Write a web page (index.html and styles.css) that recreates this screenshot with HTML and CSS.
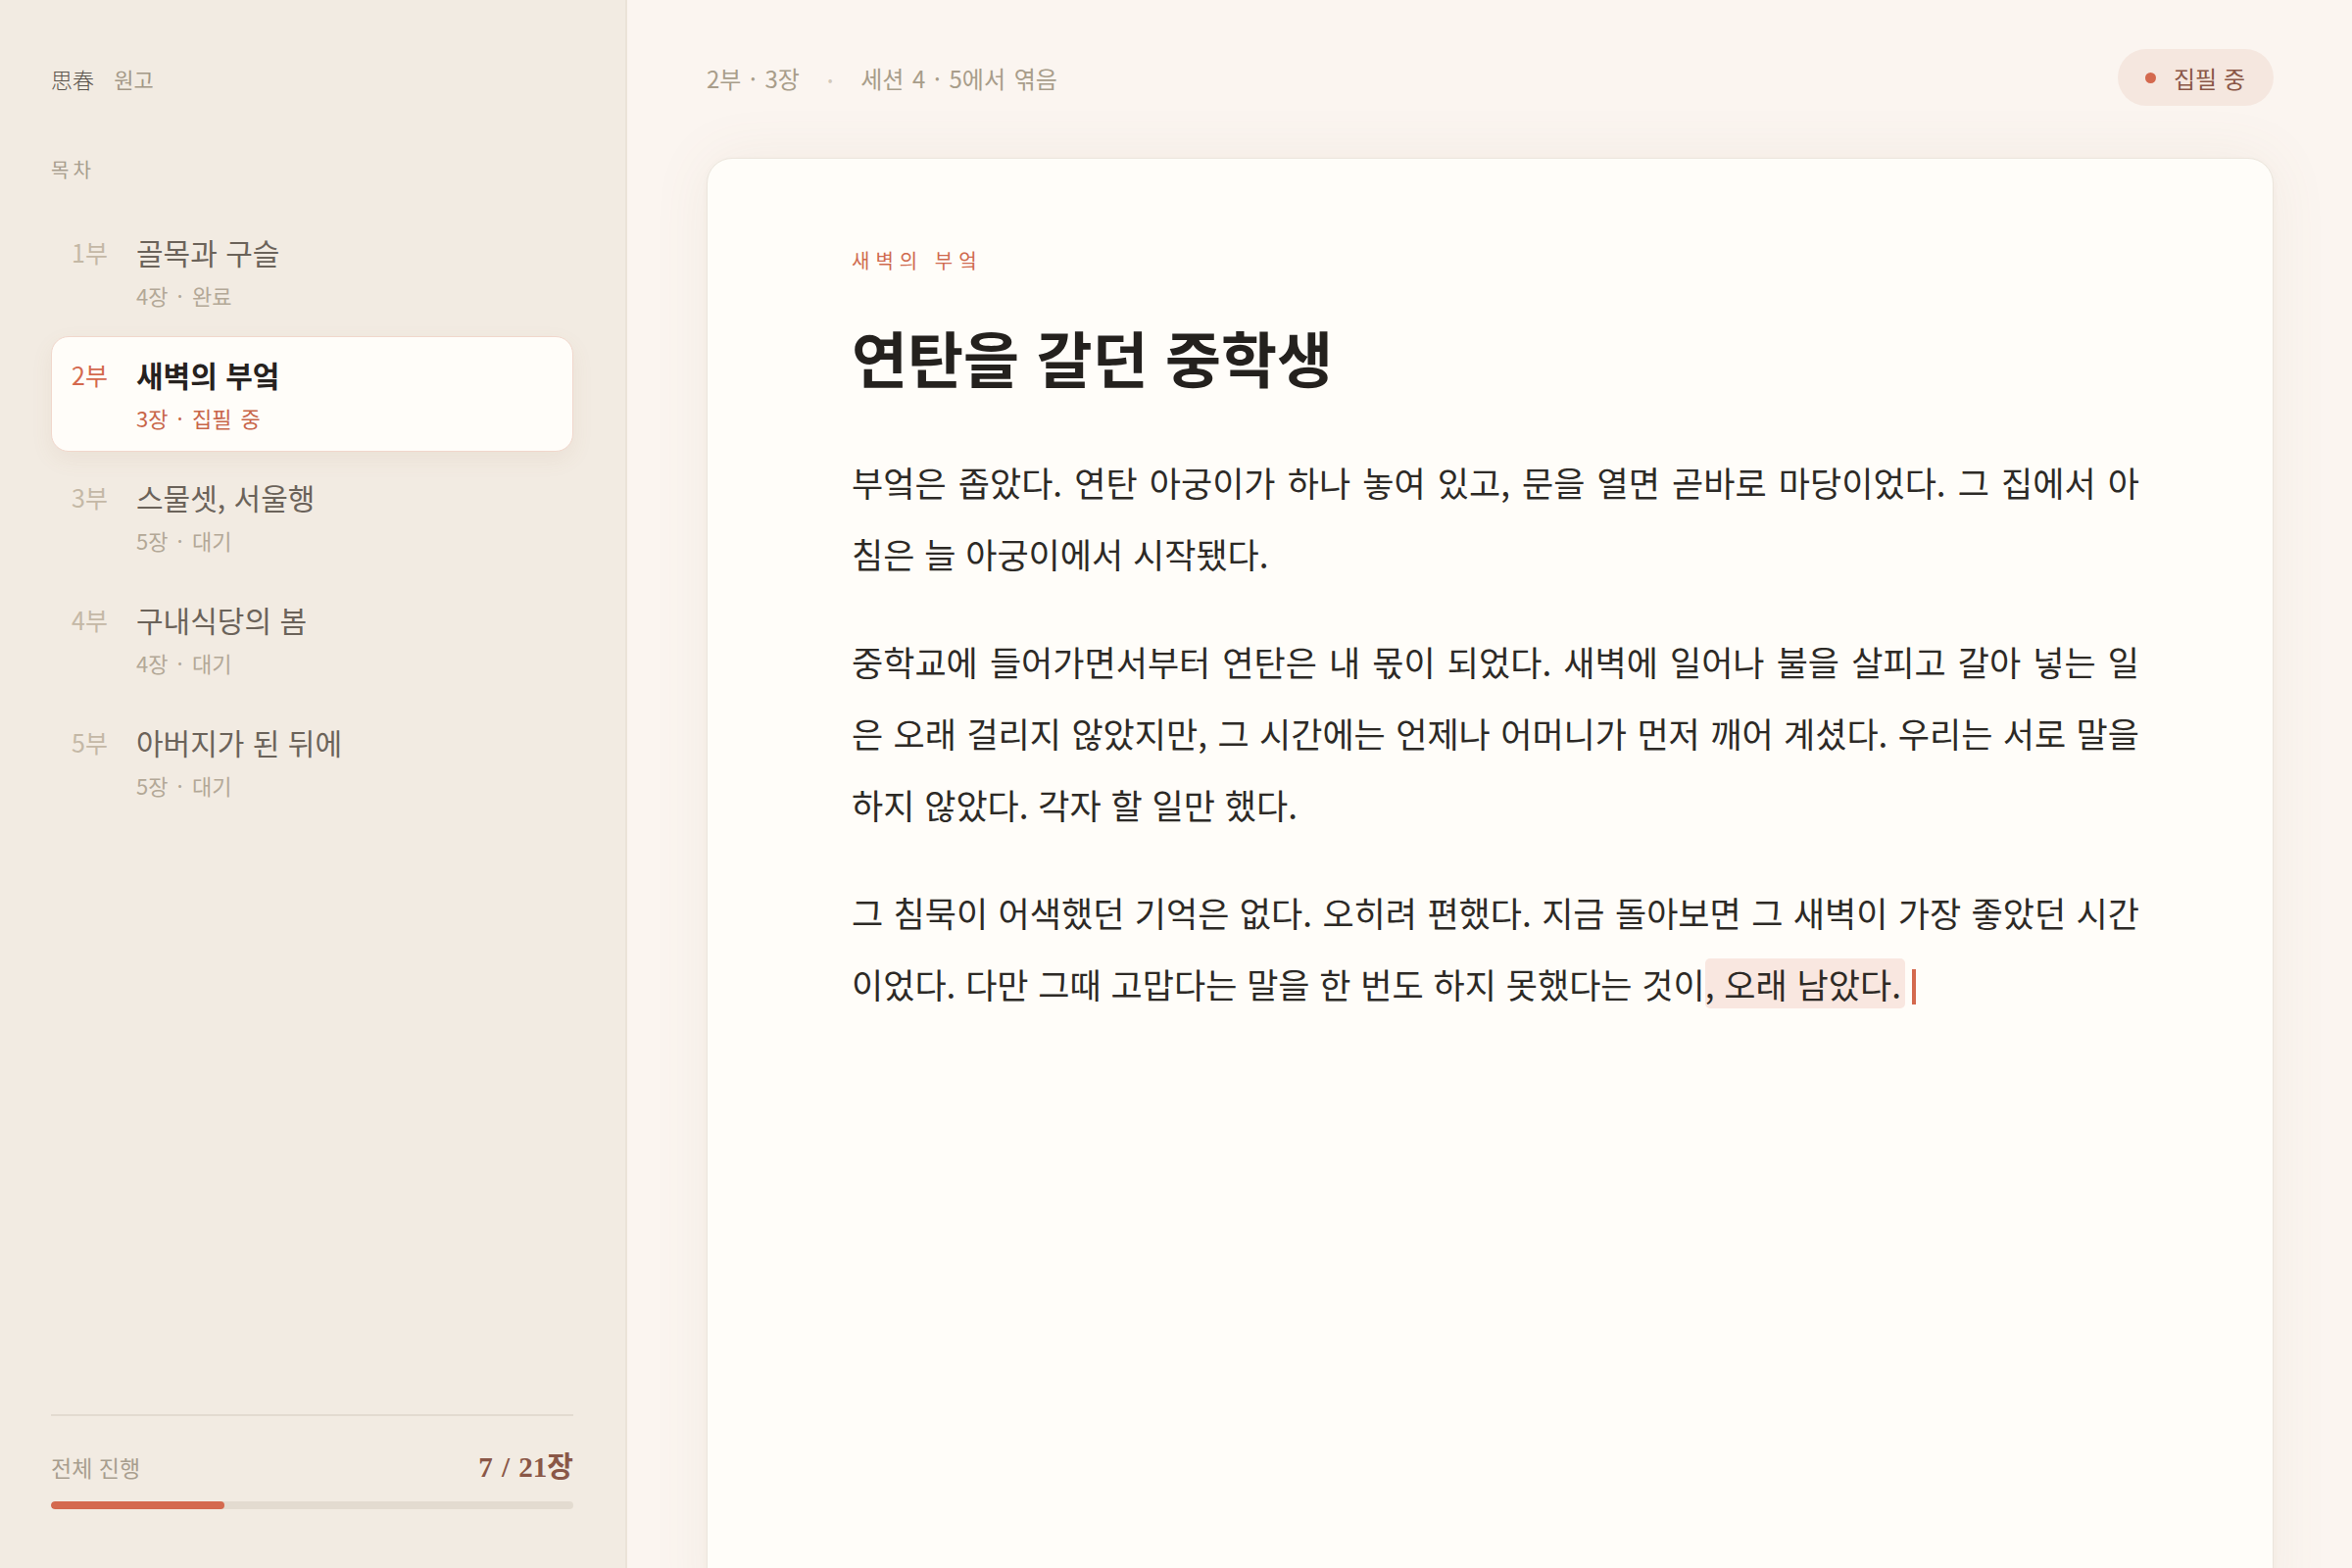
FILE: index.html
```html
<!DOCTYPE html>
<html lang="ko">

<head>
    <meta charset="UTF-8">
    <meta name="viewport" content="width=device-width, initial-scale=1.0">
    <title>思春 원고</title>
    <link rel="stylesheet" href="styles.css">
</head>

<body>
    <div class="app">
        <aside class="sidebar">
            <div class="brand">
                <span class="brand-mark">思春</span>
                <span class="brand-name">원고</span>
            </div>

            <div class="toc-label">목차</div>

            <ul class="toc">
                <li class="part">
                    <span class="part-no">1부</span>
                    <div class="part-title">골목과 구슬</div>
                    <div class="part-meta">4장 · 완료</div>
                </li>
                <li class="part active">
                    <span class="part-no">2부</span>
                    <div class="part-title">새벽의 부엌</div>
                    <div class="part-meta">3장 · 집필 중</div>
                </li>
                <li class="part">
                    <span class="part-no">3부</span>
                    <div class="part-title">스물셋, 서울행</div>
                    <div class="part-meta">5장 · 대기</div>
                </li>
                <li class="part">
                    <span class="part-no">4부</span>
                    <div class="part-title">구내식당의 봄</div>
                    <div class="part-meta">4장 · 대기</div>
                </li>
                <li class="part">
                    <span class="part-no">5부</span>
                    <div class="part-title">아버지가 된 뒤에</div>
                    <div class="part-meta">5장 · 대기</div>
                </li>
            </ul>

            <div class="progress">
                <div class="progress-row">
                    <span class="progress-label">전체 진행</span>
                    <span class="progress-count">7 / 21장</span>
                </div>
                <div class="progress-track">
                    <div class="progress-fill" style="width: 33.3%"></div>
                </div>
            </div>
        </aside>

        <main class="main">
            <header class="topbar">
                <div class="crumbs">
                    <span>2부 · 3장</span>
                    <span class="sep">•</span>
                    <span>세션 4 · 5에서 엮음</span>
                </div>
                <div class="status">
                    <span class="status-dot"></span>
                    집필 중
                </div>
            </header>

            <article class="sheet">
                <div class="kicker">새벽의 부엌</div>
                <h1 class="chapter-title">연탄을 갈던 중학생</h1>

                <p>부엌은 좁았다. 연탄 아궁이가 하나 놓여 있고, 문을 열면 곧바로 마당이었다. 그 집에서 아침은 늘 아궁이에서 시작됐다.</p>

                <p>중학교에 들어가면서부터 연탄은 내 몫이 되었다. 새벽에 일어나 불을 살피고 갈아 넣는 일은 오래 걸리지 않았지만, 그 시간에는 언제나 어머니가 먼저 깨어 계셨다. 우리는 서로 말을 하지 않았다. 각자 할 일만 했다.</p>

                <p>그 침묵이 어색했던 기억은 없다. 오히려 편했다. 지금 돌아보면 그 새벽이 가장 좋았던 시간이었다. 다만 그때 고맙다는 말을 한 번도 하지 못했다는 것이<mark class="fresh">, 오래 남았다.</mark><span class="caret"></span></p>
            </article>
        </main>
    </div>
</body>

</html>
```

FILE: styles.css
```css
* {
    box-sizing: border-box;
}

body {
    margin: 0;
    font-family: "Noto Sans CJK KR", "Noto Sans", sans-serif;
    background: #fbf5f0;
    color: #2d2a26;
    overflow: hidden;
}

.app {
    display: grid;
    grid-template-columns: 640px 1fr;
    height: 100vh;
}

/* 왼쪽 목차 */
.sidebar {
    display: flex;
    flex-direction: column;
    padding: 64px 53px 60px 52px;
    background: #f2ebe2;
    border-right: 2px solid #ebe3d8;
}

.brand {
    font-size: 22px;
    line-height: 32px;
}

.brand-mark {
    color: #5b544c;
    font-weight: 300;
}

.brand-name {
    margin-left: 14px;
    color: #a39887;
}

.toc-label {
    margin-top: 62px;
    font-size: 20px;
    line-height: 30px;
    letter-spacing: 0.2em;
    color: #a89e8e;
}

.toc {
    list-style: none;
    margin: 30px 0 0;
    padding: 0;
    display: flex;
    flex-direction: column;
    gap: 7px;
}

.part {
    display: grid;
    grid-template-columns: 46px 1fr;
    column-gap: 20px;
    padding: 18px 20px;
    border: 1px solid transparent;
    border-radius: 18px;
}

.part-no {
    grid-row: 1;
    font-size: 25px;
    line-height: 40px;
    color: #c4b8a6;
}

.part-title {
    grid-column: 2;
    grid-row: 1;
    font-size: 30px;
    line-height: 40px;
    color: #6b635a;
}

.part-meta {
    grid-column: 2;
    margin-top: 8px;
    font-size: 22px;
    line-height: 32px;
    word-spacing: 3px;
    color: #b3a897;
}

.part.active {
    background: #fffdf9;
    border-color: #f1d7cc;
    box-shadow: 0 8px 22px rgba(150, 110, 80, 0.08);
}

.part.active .part-no {
    color: #d4694e;
}

.part.active .part-title {
    color: #26221f;
    font-weight: 700;
}

.part.active .part-meta {
    color: #c8664a;
}

.progress {
    margin-top: auto;
    padding-top: 36px;
    border-top: 2px solid #e3dbd0;
}

.progress-row {
    display: flex;
    justify-content: space-between;
    align-items: baseline;
    line-height: 32px;
}

.progress-label {
    font-size: 23px;
    color: #a89e8f;
}

.progress-count {
    font-family: "Liberation Serif", "Noto Sans CJK KR", serif;
    font-size: 29px;
    font-weight: 700;
    word-spacing: 2px;
    color: #8a5747;
}

.progress-track {
    margin-top: 19px;
    height: 8px;
    border-radius: 4px;
    background: #e3dbd0;
    overflow: hidden;
}

.progress-fill {
    height: 100%;
    border-radius: 4px;
    background: #d4694e;
}

/* 본문 영역 */
.main {
    display: flex;
    flex-direction: column;
    padding: 50px 80px 0 81px;
    overflow: hidden;
}

.topbar {
    display: flex;
    justify-content: space-between;
    align-items: center;
    height: 58px;
}

.crumbs {
    font-size: 24px;
    word-spacing: 2px;
    color: #a89d8a;
}

.crumbs .sep {
    margin: 0 20px;
    font-size: 14px;
    vertical-align: 3px;
    color: #d3c9ba;
}

.status {
    display: flex;
    align-items: center;
    gap: 18px;
    height: 58px;
    padding: 0 29px 0 28px;
    border-radius: 29px;
    background: #f5e7df;
    font-size: 24px;
    color: #8a5747;
}

.status-dot {
    width: 11px;
    height: 11px;
    border-radius: 50%;
    background: #d4694e;
}

.sheet {
    flex: 1;
    min-height: 1500px;
    margin-top: 53px;
    padding: 90px 136px 90px 147px;
    background: #fffdf9;
    border: 1px solid #ebe5dc;
    border-radius: 26px;
    box-shadow: 0 0 60px rgba(140, 110, 80, 0.08), 0 2px 6px rgba(140, 110, 80, 0.04);
}

.kicker {
    font-size: 20px;
    line-height: 28px;
    letter-spacing: 0.3em;
    color: #cf6a4f;
}

.chapter-title {
    margin: 48px 0 55px;
    font-size: 62px;
    line-height: 72px;
    font-weight: 700;
    color: #24211e;
}

.sheet p {
    margin: 0 0 37px;
    font-size: 35px;
    line-height: 73px;
    text-align: justify;
    color: #2d2a26;
}

.fresh {
    padding: 0 4px 0 0;
    border-radius: 5px;
    background: #f9e7e0;
    color: inherit;
}

.caret {
    display: inline-block;
    width: 4px;
    height: 36px;
    margin-left: 7px;
    vertical-align: -6px;
    background: #d4694e;
}
```
